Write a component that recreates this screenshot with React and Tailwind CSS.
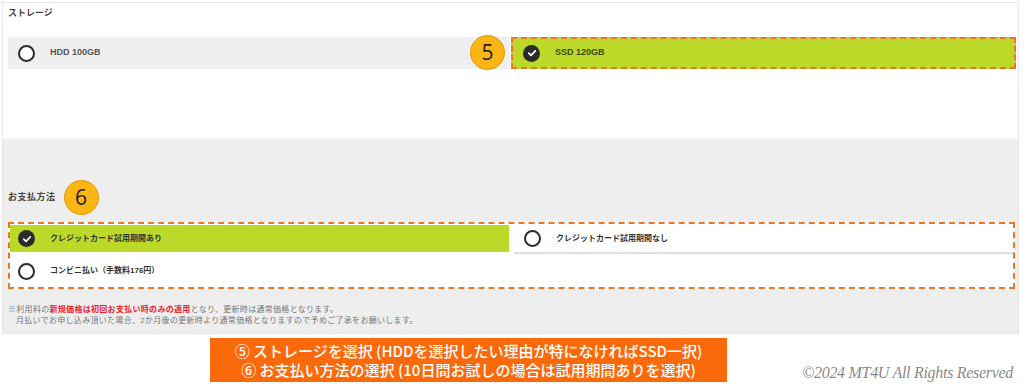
const jp = "font-['Liberation_Sans','Noto_Sans_CJK_JP',sans-serif]";

const Radio = ({ checked }) =>
  checked ? (
    <span className="w-[17px] h-[17px] rounded-full bg-[#2b2b2b] flex items-center justify-center shrink-0">
      <svg width="10" height="10" viewBox="0 0 10 10" fill="none">
        <path d="M1.8 5.2 L4 7.3 L8.3 2.8" stroke="#fff" strokeWidth="1.7" strokeLinecap="round" strokeLinejoin="round" />
      </svg>
    </span>
  ) : (
    <span className="w-[17px] h-[17px] rounded-full border-2 border-[#2b2b2b] bg-white shrink-0" />
  );

const Badge = ({ n, className = '' }) => (
  <div className={`w-[35px] h-[35px] rounded-full bg-[#fbb515] border border-[#e09a10] flex items-center justify-center text-[21px] leading-none text-[#222] font-['Open_Sans',sans-serif] ${className}`}>
    {n}
  </div>
);

const App = () => (
  <div className={`w-[1024px] h-[389px] bg-white overflow-hidden ${jp}`}>
    <div className="ml-[2px] mt-[2px] w-[1017px] border border-[#e6e6e6]">
      {/* storage */}
      <div className="bg-white h-[136px] pl-[5px] pr-[2px] pt-[4px]">
        <div className="text-[9px] leading-[12px] font-bold text-[#444]">ストレージ</div>
        <div className="relative mt-[18px] flex gap-[1px] h-[32px]">
          <div className="w-[502px] bg-[#efefef] flex items-center pl-[10px] gap-[15px]">
            <Radio />
            <span className="text-[9px] font-bold text-[#555]">HDD 100GB</span>
          </div>
          <div className="flex-1 bg-[#bcd92a] border-2 border-dashed border-[#e8772a] flex items-center pl-[10px] gap-[15px]">
            <Radio checked />
            <span className="text-[9px] font-bold text-[#3d4a10]">SSD 120GB</span>
          </div>
          <Badge n="5" className="absolute left-[462px] top-[-2px]" />
        </div>
      </div>

      {/* payment */}
      <div className="bg-[#eeeeee] h-[194px] pl-[5px] pr-[3px] pt-[41px]">
        <div className="flex items-center gap-[8px]">
          <span className="text-[9px] font-bold text-[#444] tracking-[0.5px]">お支払方法</span>
          <Badge n="6" />
        </div>
        <div className="mt-[7px] bg-white border-2 border-dashed border-[#e8772a] pt-[1px] flex flex-col gap-[3px]">
          <div className="grid grid-cols-2 gap-[5px] h-[27px]">
            <div className="bg-[#bcd92a] flex items-center pl-[8px] gap-[15px]">
              <Radio checked />
              <span className="text-[8px] font-bold text-[#333]">クレジットカード試用期間あり</span>
            </div>
            <div className="bg-white shadow-[0_2px_1px_rgba(0,0,0,0.12)] flex items-center pl-[10px] gap-[15px]">
              <Radio />
              <span className="text-[8px] font-bold text-[#333]">クレジットカード試用期間なし</span>
            </div>
          </div>
          <div className="h-[32px] flex items-center pl-[8px] gap-[15px]">
            <Radio />
            <span className="text-[8px] font-bold text-[#333]">コンビニ払い（手数料176円）</span>
          </div>
        </div>
        <div className="mt-[15px] text-[8px] leading-[11px] text-[#777] tracking-[0.3px]">
          <p>
            ※利用料の<span className="text-[#e8262a] font-bold">新規価格は初回お支払い時のみの適用</span>となり、更新時は通常価格となります。
          </p>
          <p className="pl-[8px]">月払いでお申し込み頂いた場合、2か月後の更新時より通常価格となりますので予めご了承をお願いします。</p>
        </div>
      </div>
    </div>

    <div className="flex items-end mt-[4px]">
      <div className="ml-[210px] w-[517px] h-[44px] bg-[#fb6a0a] text-white text-[15px] leading-[19px] font-medium text-center pt-[3px] font-['Noto_Sans_CJK_JP',sans-serif]">
        <p>⑤ ストレージを選択 (HDDを選択したい理由が特になければSSD一択)</p>
        <p>⑥ お支払い方法の選択 (10日間お試しの場合は試用期間ありを選択)</p>
      </div>
      <div className="ml-auto mr-[11px] mb-[-3px] italic text-[16px] tracking-[-0.3px] text-[#8a8a8a] font-['Liberation_Serif',serif]">
        ©2024 MT4U All Rights Reserved
      </div>
    </div>
  </div>
);

export default App;
